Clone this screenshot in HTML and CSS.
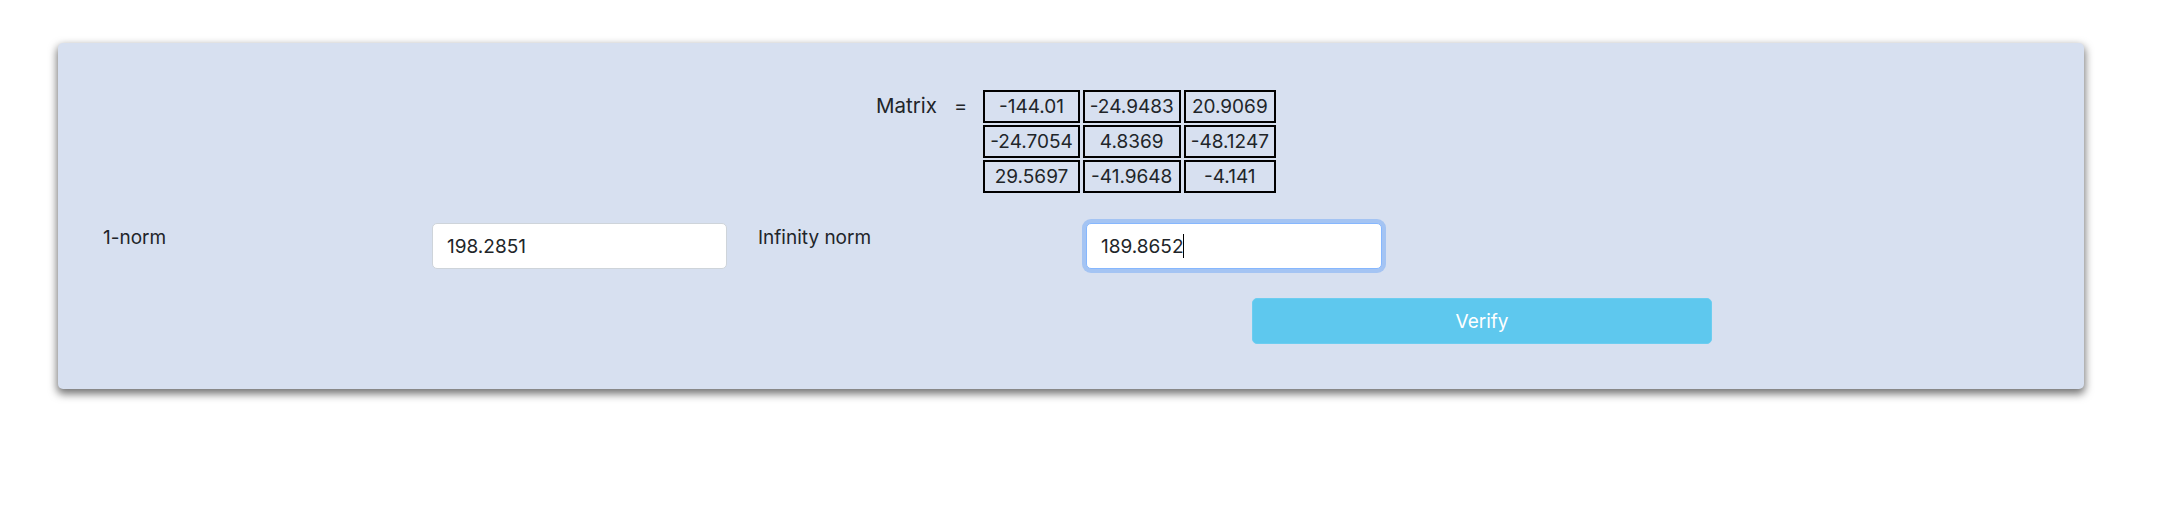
FILE: index.html
```html
<!DOCTYPE html>
<html lang="en">
<head>
<meta charset="utf-8">
<title>Matrix norms</title>
<link rel="stylesheet" href="styles.css">
</head>
<body>
<div class="card">
  <div class="matrix-row">
    <span class="matrix-label">Matrix</span>
    <span class="matrix-eq">=</span>
    <table class="matrix">
      <tr><td>-144.01</td><td>-24.9483</td><td>20.9069</td></tr>
      <tr><td>-24.7054</td><td>4.8369</td><td>-48.1247</td></tr>
      <tr><td>29.5697</td><td>-41.9648</td><td>-4.141</td></tr>
    </table>
  </div>
  <div class="form-row">
    <label class="form-label" for="one">1-norm</label>
    <input class="form-input" id="one" type="text" value="198.2851">
    <label class="form-label form-label-2" for="inf">Infinity norm</label>
    <div class="input-wrap">
      <input class="form-input is-focus" id="inf" type="text" value="189.8652">
      <span class="caret"></span>
    </div>
  </div>
  <div class="button-row">
    <button class="verify" type="button">Verify</button>
  </div>
</div>
</body>
</html>
```

FILE: styles.css
```css
* { box-sizing: border-box; }
html, body {
  min-height: 100vh;
}
body {
  margin: 0;
  padding: 43px 96px 60px 58px;
  background: #ffffff;
  font-family: Inter, "Liberation Sans", sans-serif;
  color: #212529;
}
.card {
  height: 346px;
  background: #d7e0f0;
  border-radius: 5px;
  box-shadow: 0 4px 9px 1px rgba(0, 0, 0, 0.55);
  padding: 47px 0 0 0;
}
.matrix-row {
  display: flex;
  justify-content: center;
  align-items: flex-start;
  padding-left: 10px;
}
.matrix-label {
  font-size: 20.5px;
  line-height: 30px;
  margin-top: 1px;
}
.matrix-eq {
  font-size: 20px;
  line-height: 30px;
  margin: 1px 16px 0 17px;
}
.matrix {
  border-collapse: separate;
  border-spacing: 3px 2px;
  margin: -2px -3px;
}
.matrix td {
  border: 2px solid #000;
  font-size: 19px;
  line-height: 25px;
  padding: 2px 5px;
  text-align: center;
}
.form-row {
  display: grid;
  grid-template-columns: 308px 295px 317px 296px;
  column-gap: 21px;
  padding-left: 45px;
  margin-top: 30px;
  align-items: start;
}
.form-label {
  font-size: 19px;
  line-height: 30px;
}
.form-label-2 {
  padding-left: 10px;
}
.input-wrap {
  position: relative;
}
.form-input {
  display: block;
  height: 46px;
  width: 100%;
  font: inherit;
  font-size: 19px;
  color: #212529;
  background: #fff;
  border: 1px solid #ced4da;
  border-radius: 5px;
  padding: 0 14px;
  outline: none;
}
.form-input.is-focus {
  border-color: #86b7fe;
  box-shadow: 0 0 0 4px rgba(13, 110, 253, 0.25);
}
.caret {
  position: absolute;
  left: 97px;
  top: 11px;
  width: 1px;
  height: 24px;
  background: #000;
}
.button-row {
  display: flex;
  margin-top: 29px;
}
.verify {
  margin-left: 1194px;
  width: 460px;
  height: 46px;
  background: #5ec8ee;
  border: 1px solid #6ccdf0;
  border-radius: 5px;
  color: #fff;
  font: inherit;
  font-size: 19px;
}
```
